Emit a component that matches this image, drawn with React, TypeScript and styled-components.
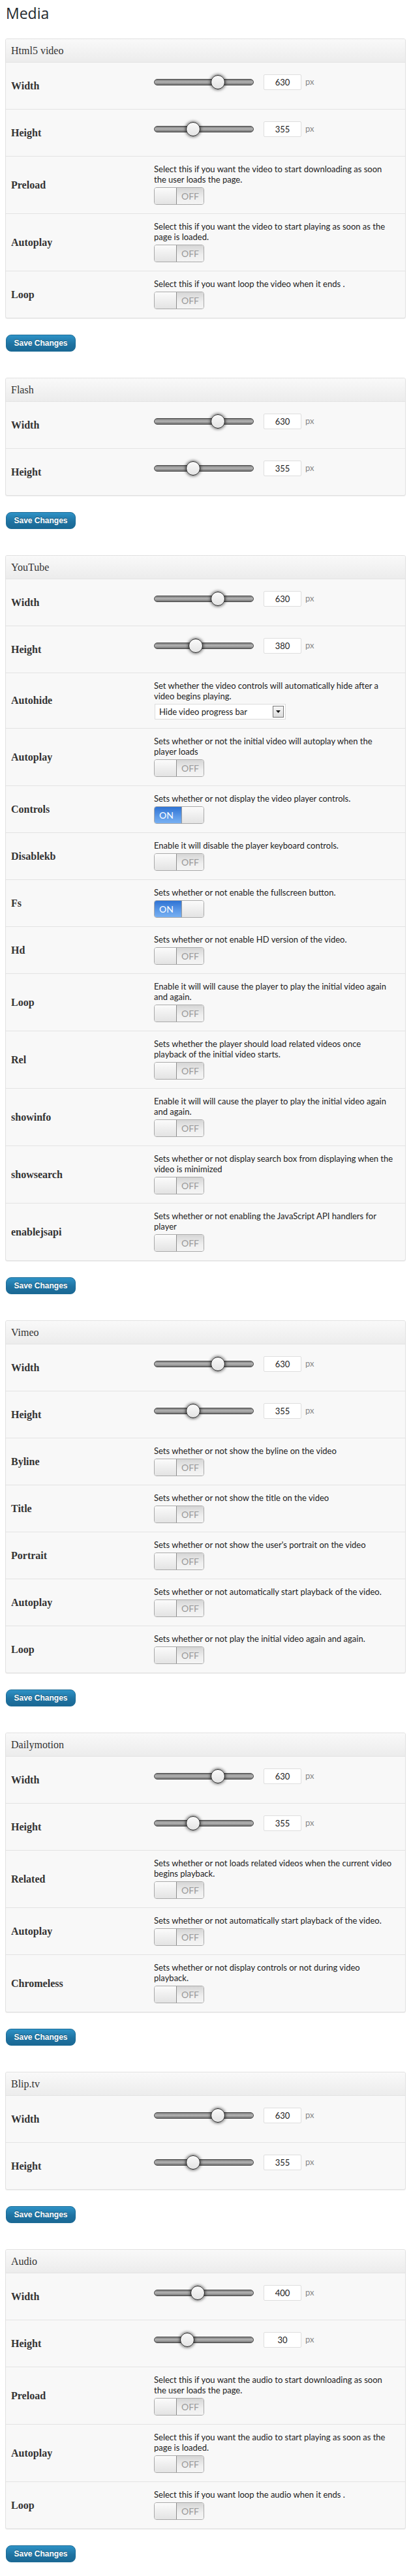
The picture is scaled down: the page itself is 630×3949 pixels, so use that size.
import React from 'react';
import styled, { createGlobalStyle } from 'styled-components';

type Field =
  | { kind: 'slider'; label: string; value: number; max: number }
  | { kind: 'toggle'; label: string; desc: string; on?: boolean }
  | { kind: 'select'; label: string; desc: string; value: string };

type Section = { title: string; fields: Field[] };

const size = (w: number, h: number, hMax = 960): Field[] => [
  { kind: 'slider', label: 'Width', value: w, max: 960 },
  { kind: 'slider', label: 'Height', value: h, max: hMax },
];

const toggle = (label: string, desc: string, on = false): Field => ({ kind: 'toggle', label, desc, on });

const sections: Section[] = [
  {
    title: 'Html5 video',
    fields: [
      ...size(630, 355),
      toggle('Preload', 'Select this if you want the video to start downloading as soon\nthe user loads the page.'),
      toggle('Autoplay', 'Select this if you want the video to start playing as soon as the\npage is loaded.'),
      toggle('Loop', 'Select this if you want loop the video when it ends .'),
    ],
  },
  { title: 'Flash', fields: size(630, 355) },
  {
    title: 'YouTube',
    fields: [
      ...size(630, 380),
      {
        kind: 'select',
        label: 'Autohide',
        desc: 'Set whether the video controls will automatically hide after a\nvideo begins playing.',
        value: 'Hide video progress bar',
      },
      toggle('Autoplay', 'Sets whether or not the initial video will autoplay when the\nplayer loads'),
      toggle('Controls', 'Sets whether or not display the video player controls.', true),
      toggle('Disablekb', 'Enable it will disable the player keyboard controls.'),
      toggle('Fs', 'Sets whether or not enable the fullscreen button.', true),
      toggle('Hd', 'Sets whether or not enable HD version of the video.'),
      toggle('Loop', 'Enable it will will cause the player to play the initial video again\nand again.'),
      toggle('Rel', 'Sets whether the player should load related videos once\nplayback of the initial video starts.'),
      toggle('showinfo', 'Enable it will will cause the player to play the initial video again\nand again.'),
      toggle('showsearch', 'Sets whether or not display search box from displaying when the\nvideo is minimized'),
      toggle('enablejsapi', 'Sets whether or not enabling the JavaScript API handlers for\nplayer'),
    ],
  },
  {
    title: 'Vimeo',
    fields: [
      ...size(630, 355),
      toggle('Byline', 'Sets whether or not show the byline on the video'),
      toggle('Title', 'Sets whether or not show the title on the video'),
      toggle('Portrait', "Sets whether or not show the user's portrait on the video"),
      toggle('Autoplay', 'Sets whether or not automatically start playback of the video.'),
      toggle('Loop', 'Sets whether or not play the initial video again and again.'),
    ],
  },
  {
    title: 'Dailymotion',
    fields: [
      ...size(630, 355),
      toggle('Related', 'Sets whether or not loads related videos when the current video\nbegins playback.'),
      toggle('Autoplay', 'Sets whether or not automatically start playback of the video.'),
      toggle('Chromeless', 'Sets whether or not display controls or not during video\nplayback.'),
    ],
  },
  { title: 'Blip.tv', fields: size(630, 355) },
  {
    title: 'Audio',
    fields: [
      { kind: 'slider', label: 'Width', value: 400, max: 960 },
      { kind: 'slider', label: 'Height', value: 30, max: 100 },
      toggle('Preload', 'Select this if you want the audio to start downloading as soon\nthe user loads the page.'),
      toggle('Autoplay', 'Select this if you want the audio to start playing as soon as the\npage is loaded.'),
      toggle('Loop', 'Select this if you want loop the audio when it ends .'),
    ],
  },
];

// track is 153px wide, thumb 22px -> 131px of travel
const TRAVEL = 131;

const Slider = ({ value, max }: { value: number; max: number }) => (
  <SliderLine>
    <Track>
      <Thumb style={{ left: Math.round((value / max) * TRAVEL) }} />
    </Track>
    <NumberBox>{value}</NumberBox>
    <Unit>px</Unit>
  </SliderLine>
);

const Switch = ({ on }: { on?: boolean }) => (
  <SwitchBox>
    {on ? (
      <>
        <OnPart>ON</OnPart>
        <Knob side="right" />
      </>
    ) : (
      <>
        <Knob side="left" />
        <OffPart>OFF</OffPart>
      </>
    )}
  </SwitchBox>
);

const FieldRow = ({ field }: { field: Field }) => (
  <Row>
    <Label>{field.label}</Label>
    <Content>
      {field.kind === 'slider' && <Slider value={field.value} max={field.max} />}
      {field.kind === 'toggle' && (
        <>
          <Desc>{field.desc}</Desc>
          <Switch on={field.on} />
        </>
      )}
      {field.kind === 'select' && (
        <>
          <Desc>{field.desc}</Desc>
          <SelectBox>
            <span>{field.value}</span>
            <SelectArrow>
              <svg width="7" height="4" viewBox="0 0 7 4">
                <path d="M0 0h7L3.5 4z" fill="#111" />
              </svg>
            </SelectArrow>
          </SelectBox>
        </>
      )}
    </Content>
  </Row>
);

const App = () => (
  <>
    <GlobalStyle />
    <Page>
      <PageTitle>Media</PageTitle>
      {sections.map(section => (
        <React.Fragment key={section.title}>
          <Card>
            <CardHeader>{section.title}</CardHeader>
            {section.fields.map((field, i) => (
              <FieldRow key={i} field={field} />
            ))}
          </Card>
          <SaveButton>Save Changes</SaveButton>
        </React.Fragment>
      ))}
    </Page>
  </>
);

const GlobalStyle = createGlobalStyle`
  body {
    margin: 0;
    background: #fff;
    font-family: Lato, "Liberation Sans", sans-serif;
  }
`;

const Page = styled.div`
  padding: 0 8px 18px 8px;
`;

const PageTitle = styled.h1`
  margin: 5px 0 23px 1px;
  font-family: "Open Sans", sans-serif;
  font-size: 23px;
  font-weight: 400;
  line-height: 31px;
  color: #23282d;
`;

const Card = styled.div`
  border: 1px solid #e1e1e1;
  border-radius: 3px;
  background: #f8f8f8;
  box-shadow: 0 1px 1px rgba(0, 0, 0, 0.07);
  overflow: hidden;
`;

const CardHeader = styled.div`
  height: 35px;
  display: flex;
  align-items: center;
  padding-left: 8px;
  background: linear-gradient(to bottom, #f9f9f9, #ececec);
  font-family: "Liberation Serif", serif;
  font-size: 16px;
  color: #333;
`;

const Row = styled.div`
  display: grid;
  grid-template-columns: 227px 1fr;
  border-top: 1px solid #e3e3e3;
`;

const Label = styled.div`
  display: flex;
  align-items: center;
  padding-left: 8px;
  font-family: "Liberation Serif", serif;
  font-weight: 700;
  font-size: 16px;
  color: #333;
`;

const Content = styled.div`
  padding: 11px 10px 13px 0;
`;

const Desc = styled.div`
  font-size: 13px;
  line-height: 16px;
  color: #222;
  white-space: pre-line;
  margin-bottom: 4px;
`;

const SliderLine = styled.div`
  display: flex;
  align-items: center;
  height: 24px;
  margin: 7px 0 16px;
`;

const Track = styled.div`
  position: relative;
  width: 153px;
  height: 10px;
  box-sizing: border-box;
  border: 1px solid #4a4a4a;
  border-radius: 5px;
  background: linear-gradient(to bottom, #7c7c7c, #b4b4b4 45%, #9a9a9a 70%, #6e6e6e);
  margin-right: 15px;
`;

const Thumb = styled.div`
  position: absolute;
  top: -7px;
  width: 22px;
  height: 22px;
  box-sizing: border-box;
  border-radius: 50%;
  border: 1.5px solid #1e1e1e;
  background: linear-gradient(to bottom, #fafafa, #e4e4e4);
  box-shadow: 0 0 4px 1px rgba(0, 0, 0, 0.55);
`;

const NumberBox = styled.div`
  width: 58px;
  height: 24px;
  box-sizing: border-box;
  border: 1px solid #dedede;
  border-radius: 2px;
  background: #fff;
  display: flex;
  align-items: center;
  justify-content: center;
  font-size: 13px;
  color: #222;
`;

const Unit = styled.span`
  margin-left: 6px;
  margin-bottom: 2px;
  font-size: 13px;
  color: #888;
`;

const SwitchBox = styled.div`
  display: flex;
  width: 77px;
  height: 27px;
  box-sizing: border-box;
  border: 1px solid #a9a9a9;
  border-radius: 4px;
  overflow: hidden;
`;

const Knob = styled.div<{ side: 'left' | 'right' }>`
  width: 33px;
  background: linear-gradient(to bottom, #fbfbfb, #e3e3e3);
  ${({ side }) => (side === 'left' ? 'border-right: 1px solid #8e8e8e;' : 'border-left: 1px solid #9a9a9a;')}
`;

const OffPart = styled.div`
  flex: 1;
  display: flex;
  align-items: center;
  justify-content: center;
  background: linear-gradient(to bottom, #d6d6d6, #efefef 60%, #f4f4f4);
  font-size: 14px;
  color: #9a9a9a;
`;

const OnPart = styled.div`
  flex: 1;
  display: flex;
  align-items: center;
  padding-left: 7px;
  background: linear-gradient(to bottom, #2f73d4, #5d9ae8 60%, #78b0f2);
  font-size: 14px;
  color: #fff;
`;

const SelectBox = styled.div`
  width: 201px;
  height: 24px;
  box-sizing: border-box;
  margin-left: 1px;
  border: 1px solid #dcdcdc;
  background: #fff;
  display: flex;
  align-items: center;
  justify-content: space-between;
  padding: 0 2px 0 6px;
  font-size: 13px;
  color: #222;
`;

const SelectArrow = styled.div`
  width: 17px;
  height: 18px;
  box-sizing: border-box;
  border: 1px solid #777;
  background: linear-gradient(to bottom, #f6f6f6, #dcdcdc);
  display: flex;
  align-items: center;
  justify-content: center;
`;

const SaveButton = styled.button`
  display: block;
  width: 107px;
  height: 26px;
  margin: 25px 0 40px 1px;
  padding: 0;
  border: 1px solid #1c6c97;
  border-radius: 8px;
  background: linear-gradient(to bottom, #2e92c6, #1f73a2 55%, #1a6894);
  color: #fff;
  font-family: "Liberation Sans", sans-serif;
  font-weight: 700;
  font-size: 12px;
  text-shadow: 0 -1px 0 rgba(0, 0, 0, 0.35);
  cursor: pointer;

  &:last-child {
    margin-bottom: 0;
  }
`;

export default App;
